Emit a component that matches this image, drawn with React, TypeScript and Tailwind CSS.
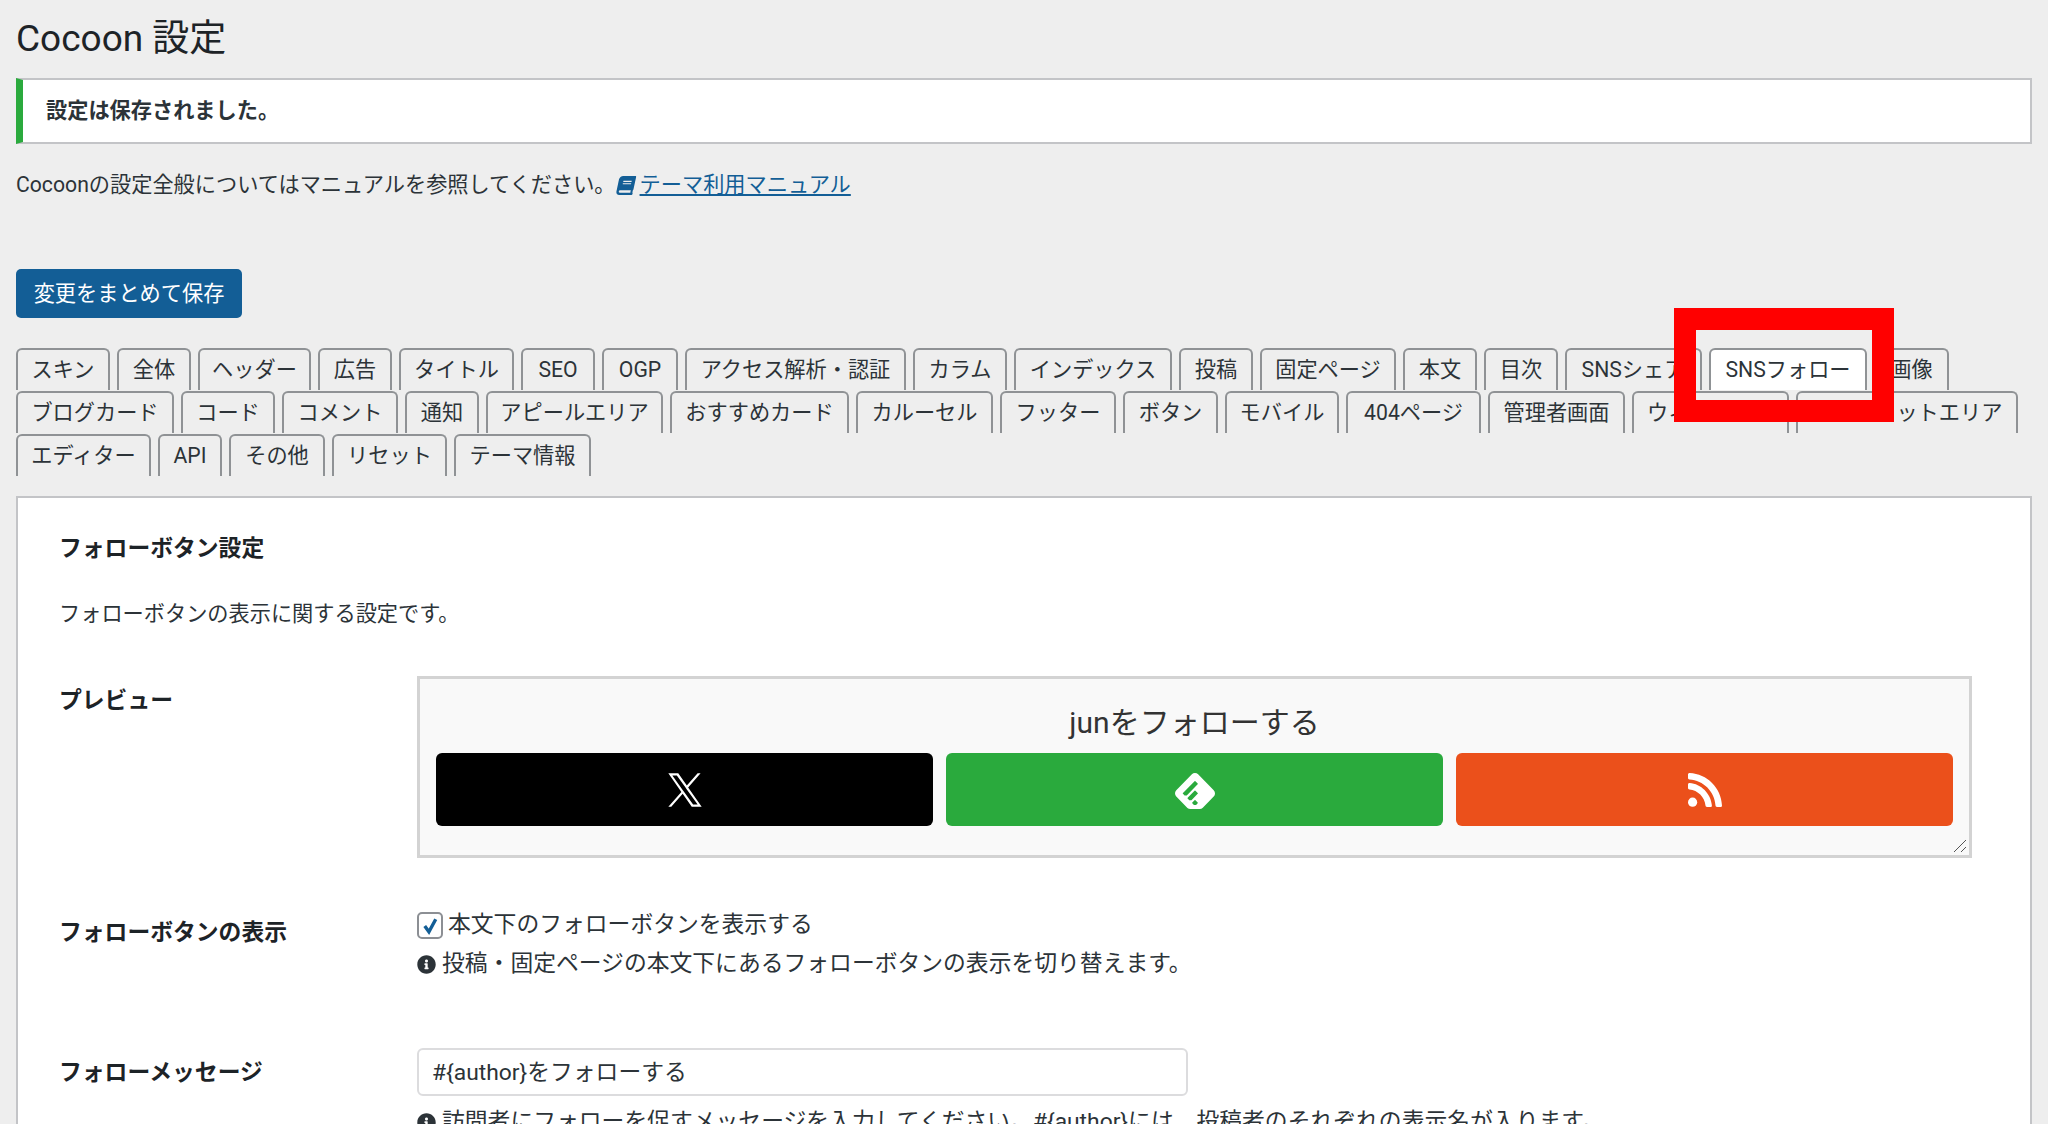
import { FaBook, FaInfoCircle } from "react-icons/fa";
import { SiFeedly } from "react-icons/si";

const rows: { t: string; w: string; active?: boolean }[][] = [
  [
    { t: "スキン", w: "w-[94px]" }, { t: "全体", w: "w-[74px]" }, { t: "ヘッダー", w: "w-[113px]" }, { t: "広告", w: "w-[74px]" },
    { t: "タイトル", w: "w-[115px]" }, { t: "SEO", w: "w-[74px]" }, { t: "OGP", w: "w-[76px]" }, { t: "アクセス解析・認証", w: "w-[221px]" },
    { t: "カラム", w: "w-[94px]" }, { t: "インデックス", w: "w-[158px]" }, { t: "投稿", w: "w-[74px]" }, { t: "固定ページ", w: "w-[136px]" },
    { t: "本文", w: "w-[74px]" }, { t: "目次", w: "w-[74px]" }, { t: "SNSシェア", w: "w-[137px]" }, { t: "SNSフォロー", w: "w-[158px]", active: true }, { t: "画像", w: "w-[75px]" },
  ],
  [
    { t: "ブログカード", w: "w-[158px]" }, { t: "コード", w: "w-[94px]" }, { t: "コメント", w: "w-[116px]" }, { t: "通知", w: "w-[74px]" },
    { t: "アピールエリア", w: "w-[177px]" }, { t: "おすすめカード", w: "w-[179px]" }, { t: "カルーセル", w: "w-[137px]" }, { t: "フッター", w: "w-[116px]" },
    { t: "ボタン", w: "w-[95px]" }, { t: "モバイル", w: "w-[114px]" }, { t: "404ページ", w: "w-[135px]" }, { t: "管理者画面", w: "w-[137px]" },
    { t: "ウィジェット", w: "w-[157px]" }, { t: "ウィジェットエリア", w: "w-[222px]" },
  ],
  [
    { t: "エディター", w: "w-[135px]" }, { t: "API", w: "w-[64px]" }, { t: "その他", w: "w-[96px]" }, { t: "リセット", w: "w-[115px]" }, { t: "テーマ情報", w: "w-[137px]" },
  ],
];

const font = "font-['Roboto','Noto_Sans_CJK_JP',sans-serif]";

export default function App() {
  return (
    <div className={`relative h-[1124px] overflow-hidden bg-[#eeeeee] px-4 text-[21.2px] text-[#2c3338] ${font}`}>
      <h1 className="pt-[15px] text-[37px] leading-[48px] font-normal text-[#1d2327]">Cocoon 設定</h1>

      <div className="mt-[15px] flex h-[66px] items-center border-y-2 border-r-2 border-l-[7px] border-y-[#c3c4c7] border-r-[#c3c4c7] border-l-[#2aaa3d] bg-white pl-[23px] font-bold">
        設定は保存されました。
      </div>

      <p className="mt-[24px] flex h-[34px] items-center">
        Cocoonの設定全般についてはマニュアルを参照してください。
        <FaBook className="mr-[5px] ml-[1px] h-[19px] w-[18px] -skew-x-12 text-[#135e96]" />
        <a className="text-[#135e96] underline underline-offset-2">テーマ利用マニュアル</a>
      </p>

      <button className="mt-[67px] flex h-[49px] w-[226px] items-center justify-center rounded-[5px] bg-[#135e96] text-white">
        変更をまとめて保存
      </button>

      <nav className="mt-[30px]">
        {rows.map((row, i) => (
          <div key={i} className="flex h-[43px] gap-[7px]">
            {row.map((tab) => (
              <div
                key={tab.t}
                className={`flex h-[42px] items-center justify-center rounded-t-[6px] border-x-2 border-t-2 border-[#8f9295] leading-none whitespace-nowrap ${tab.w} ${tab.active ? "bg-white" : "bg-[#eeeeee]"}`}
              >
                {tab.t}
              </div>
            ))}
          </div>
        ))}
      </nav>

      <section className="mt-[19px] h-[640px] border-2 border-[#c3c4c7] bg-white pt-[36px] pr-[28px] pl-[41px]">
        <h2 className="text-[22.8px] leading-[30px] font-bold text-[#1d2327]">フォローボタン設定</h2>
        <p className="mt-[36px] leading-[28px]">フォローボタンの表示に関する設定です。</p>

        <div className="mt-[48px] flex">
          <div className="w-[358px] shrink-0 pt-[10px] text-[22.8px] leading-[30px] font-bold text-[#1d2327]">プレビュー</div>
          <div className="relative flex h-[182px] w-[1555px] flex-col border-[3px] border-[#d3d3d3] bg-[#f9f9f9] px-[16px]">
            <div className="mt-[24px] h-[50px] text-center text-[30px] leading-[40px] text-[#333333]">junをフォローする</div>
            <div className="flex h-[73px] gap-[13px]">
              <div className="flex flex-1 items-center justify-center rounded-[6px] bg-black">
                <svg viewBox="0 0 24 24" className="h-[40px] w-[40px]" fill="#ffffff">
                  <path d="M13.9 10.47 21.35 2h-1.77l-6.47 7.35L7.95 2H2l7.82 11.14L2 22h1.77l6.83-7.77L16.05 22H22l-8.1-11.53Zm-2.42 2.75-.79-1.1L4.4 3.3h2.71l5.08 7.12.79 1.1 6.6 9.25h-2.71l-5.39-7.55Z" />
                </svg>
              </div>
              <div className="flex flex-1 items-center justify-center rounded-[6px] bg-[#2aaa3d]">
                <SiFeedly className="mt-[2px] h-[40px] w-[40px] text-white" />
              </div>
              <div className="flex flex-1 items-center justify-center rounded-[6px] bg-[#eb501b]">
                <svg viewBox="0 0 34 34" className="h-[34px] w-[34px]" fill="#ffffff">
                  <circle cx="4.6" cy="29.2" r="4.6" />
                  <path d="M0 11.4c0-.9.7-1.6 1.6-1.5C13 10.6 23 20.6 23.9 32.4c.1.9-.6 1.6-1.5 1.6h-3.4c-.8 0-1.5-.6-1.5-1.4C16.7 24 9.8 17.2 1.4 16.5.6 16.4 0 15.800 0 15v-3.6Z" />
                  <path d="M0 1.5C0 .6.7 0 1.6 0 19.1.8 33.2 14.9 34 32.4c0 .9-.7 1.6-1.6 1.6h-3.4c-.8 0-1.5-.6-1.5-1.4C26.8 18.5 15.4 7.1 1.4 6.4.6 6.3 0 5.7 0 4.9V1.5Z" />
                </svg>
              </div>
            </div>
            <svg viewBox="0 0 14 14" className="absolute right-[2px] bottom-[2px] h-[14px] w-[14px]" stroke="#555555" strokeWidth="1" fill="none">
              <path d="M1 13 13 1M8 13l5-5" />
            </svg>
          </div>
        </div>

        <div className="mt-[53px] flex">
          <div className="w-[358px] shrink-0 pt-[7px] text-[22.8px] leading-[30px] font-bold text-[#1d2327]">フォローボタンの表示</div>
          <div className="text-[22.8px]">
            <label className="flex h-[28px] items-center">
              <span className="mr-[5px] flex h-[27px] w-[26px] items-center justify-center rounded-[5px] border-2 border-[#8c8f94] bg-white">
                <svg viewBox="0 0 20 20" className="h-[21px] w-[21px]" fill="none" stroke="#135e96" strokeWidth="3.2">
                  <path d="m4.5 10.5 4 5.5 6.5-12" />
                </svg>
              </span>
              本文下のフォローボタンを表示する
            </label>
            <div className="mt-[10px] flex h-[30px] items-center gap-[6px]">
              <FaInfoCircle className="h-[19px] w-[19px] shrink-0" />
              投稿・固定ページの本文下にあるフォローボタンの表示を切り替えます。
            </div>
          </div>
        </div>

        <div className="mt-[69px] flex">
          <div className="w-[358px] shrink-0 pt-[10px] text-[22.8px] leading-[30px] font-bold text-[#1d2327]">フォローメッセージ</div>
          <div className="text-[22.8px]">
            <div className="flex h-[48px] w-[771px] items-center rounded-[6px] border-2 border-[#dcdcde] bg-white pt-[2px] pl-[13px]">#{"{author}"}をフォローする</div>
            <div className="mt-[11px] flex h-[30px] items-center gap-[6px] whitespace-nowrap">
              <FaInfoCircle className="h-[19px] w-[19px] shrink-0" />
              訪問者にフォローを促すメッセージを入力してください。#{"{author}"}には、投稿者のそれぞれの表示名が入ります。
            </div>
          </div>
        </div>
      </section>

      <div className="absolute top-[308px] left-[1674px] h-[114px] w-[220px] border-[22px] border-[#ff0000]" />
    </div>
  );
}
